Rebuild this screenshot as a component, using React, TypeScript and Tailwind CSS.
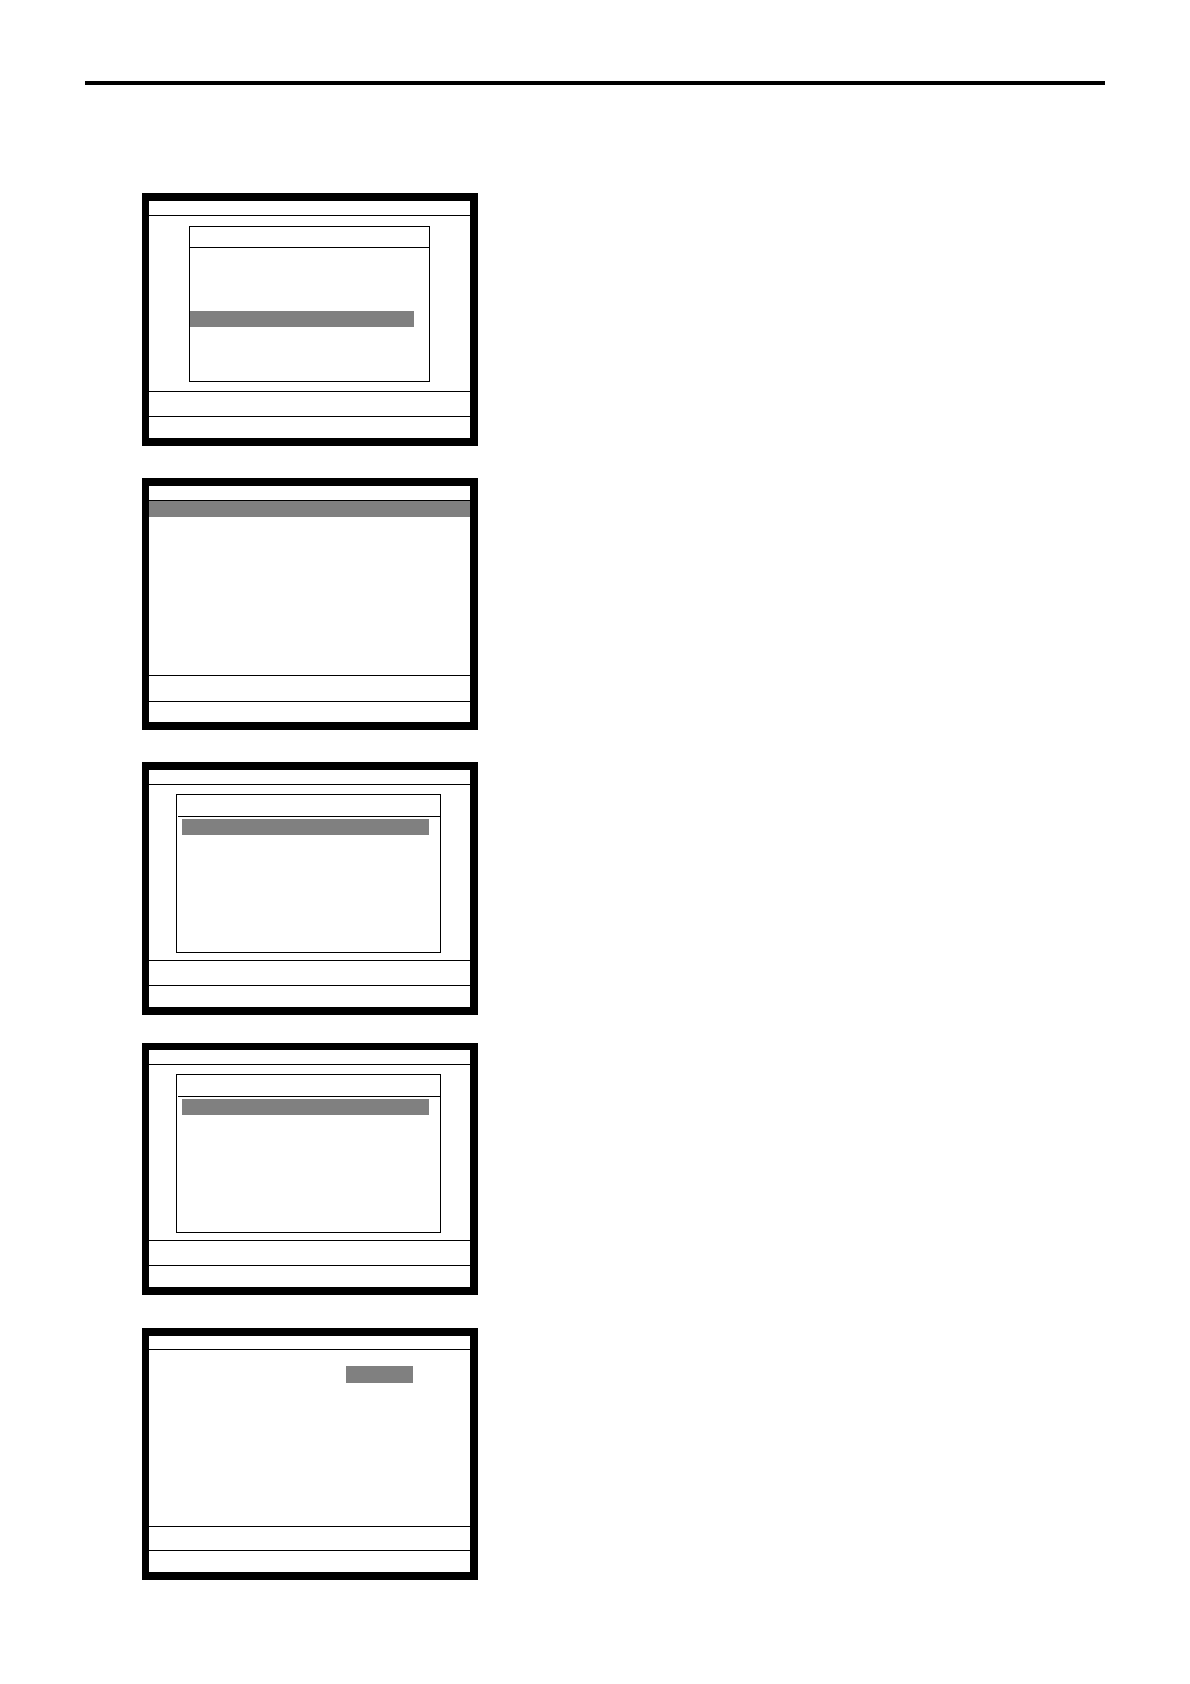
import { ReactNode } from 'react';
import clsx from 'clsx';

interface ScreenProps {
  children?: ReactNode;
  className?: string;
  titleClass?: string;
  bodyClass?: string;
  messageClass?: string;
  keysClass?: string;
}

// Terminal screen: title bar, body, message line and function key line
function Screen({
  children,
  className = 'border-t-8',
  titleClass = 'h-[14px]',
  bodyClass = 'h-[175px]',
  messageClass = 'h-6',
  keysClass = 'h-[21px]',
}: ScreenProps) {
  return (
    <section className={clsx('w-[336px] max-w-full box-border border-black border-l-[7px] border-r-8 border-b-8 bg-white', className)}>
      <header className={clsx('box-content border-b border-black', titleClass)} />
      <div className={clsx('box-content flow-root border-b border-black', bodyClass)}>{children}</div>
      <div className={clsx('box-content border-b border-black', messageClass)} />
      <footer className={keysClass} />
    </section>
  );
}

function Highlight({ className }: { className?: string }) {
  return <div className={clsx('bg-[#808080]', className)} />;
}

function MenuWindow() {
  return (
    <div className="mx-10 mt-[10px] h-[156px] border border-black">
      <div className="h-[21px] border-b border-black" />
      <Highlight className="mt-[63px] mr-[15px] h-4" />
    </div>
  );
}

function ListWindow() {
  return (
    <div className="ml-[27px] mr-[29px] mt-[9px] h-[159px] border border-black">
      <div className="ml-px h-[22px] border-b border-black" />
      <Highlight className="mt-[2px] ml-[5px] mr-[11px] h-4" />
    </div>
  );
}

export default function App() {
  return (
    <main className="min-h-screen bg-white px-[85px] pt-[81px] pb-[104px]">
      <hr className="border-t-4 border-black" />
      <div className="ml-[57px] mt-[108px] flex flex-col">
        <Screen>
          <MenuWindow />
        </Screen>
        <Screen className="mt-8 border-t-8" bodyClass="h-[174px]" messageClass="h-[25px]" keysClass="h-5">
          <Highlight className="h-4" />
        </Screen>
        <Screen className="mt-8 border-t-8">
          <ListWindow />
        </Screen>
        <Screen className="mt-7 border-t-[7px]">
          <ListWindow />
        </Screen>
        <Screen className="mt-[33px] border-t-8" titleClass="h-[13px]" bodyClass="h-[176px]" messageClass="h-[23px]">
          <Highlight className="ml-auto mr-[57px] mt-4 h-[17px] w-[67px]" />
        </Screen>
      </div>
    </main>
  );
}
